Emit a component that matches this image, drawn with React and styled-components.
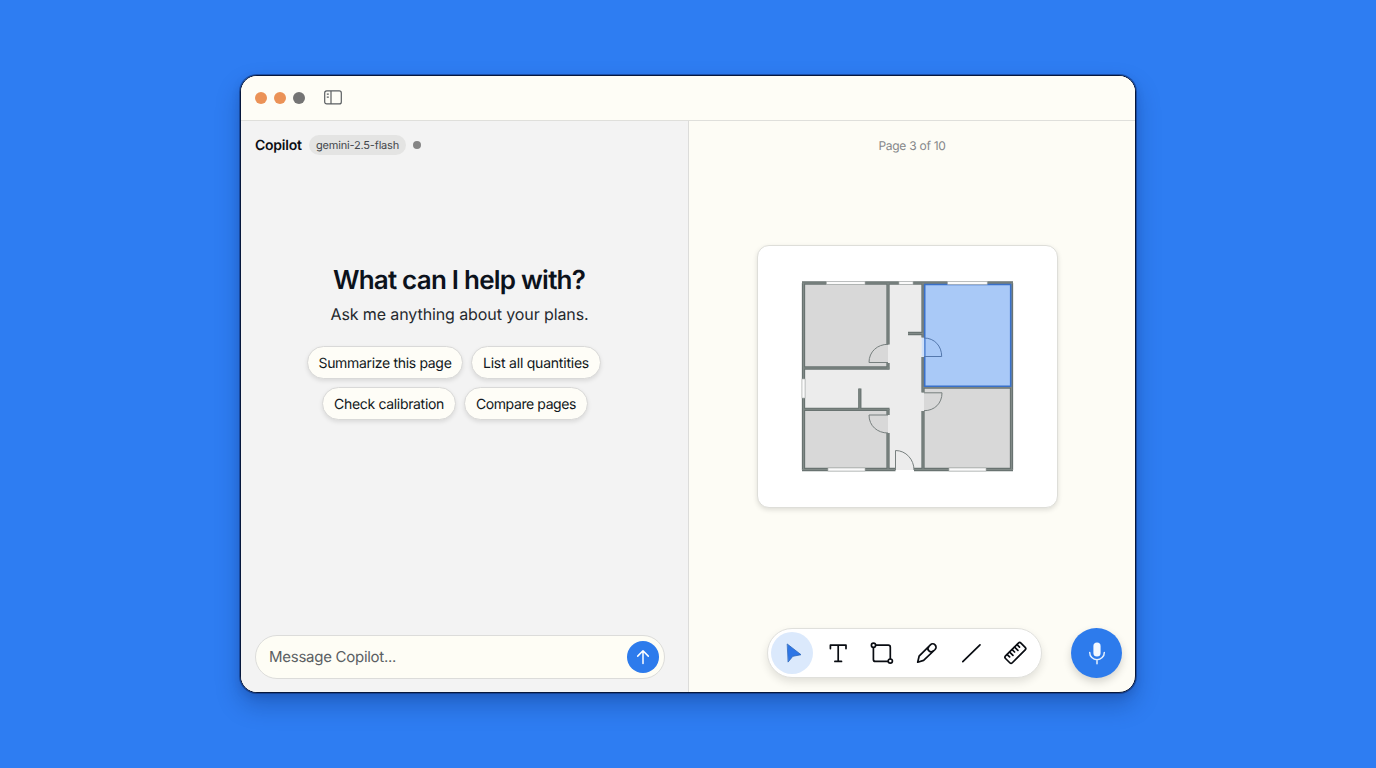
import React, { useState } from 'react';
import styled, { createGlobalStyle } from 'styled-components';


const GlobalStyle = createGlobalStyle`
    * {
        box-sizing: border-box;
    }

    body {
        background-color: #2e7df2;
        font-family: Inter, "Liberation Sans", sans-serif;
        margin: 0;
        text-rendering: geometricPrecision;
    }

    button, input {
        font-family: inherit;
        text-rendering: inherit;
    }
`

const Desktop = styled.main`
    height: 768px;
    padding: 75px 240px 0;
    width: 1376px;
`

const Window = styled.section`
    background-color: #fdfcf5;
    border: 1px solid #07183c;
    border-radius: 17px;
    box-shadow: 0 0 0 1px rgba(9, 40, 105, 0.5), 0 12px 24px rgba(10, 35, 95, 0.3), 0 3px 8px rgba(10, 35, 95, 0.15);
    display: flex;
    flex-direction: column;
    height: 618px;
    overflow: hidden;
`

const TitleBar = styled.header`
    align-items: center;
    background-color: #fefdf6;
    border-bottom: 1px solid #dfdfdb;
    display: flex;
    gap: 7px;
    height: 45px;
    padding: 0 0 1px 14px;
`

const Light = styled.span`
    background-color: ${props => props.$color};
    border-radius: 50%;
    height: 12px;
    width: 12px;
`

const SidebarIcon = styled.svg`
    display: block;
    margin-left: 12px;
`

const Columns = styled.div`
    display: grid;
    flex: 1;
    grid-template-columns: 448px 1fr;
`

const ChatPane = styled.div`
    background-color: #f3f3f3;
    border-right: 1px solid #dcdcda;
    display: flex;
    flex-direction: column;
    padding: 14px 23px 13px 14px;
`

const ChatHeader = styled.div`
    align-items: center;
    display: flex;
    height: 20px;
`

const Name = styled.h2`
    color: #0c0f14;
    font-size: 14px;
    font-weight: 600;
    letter-spacing: -0.25px;
    line-height: 18px;
    margin: 2px 0 0;
    width: 54px;
`

const Model = styled.span`
    background-color: #e4e4e3;
    border-radius: 10px;
    color: #43474b;
    font-size: 11px;
    height: 20px;
    letter-spacing: -0.18px;
    line-height: 20px;
    text-align: center;
    white-space: nowrap;
    width: 97px;
`

const StatusDot = styled.span`
    background-color: #858585;
    border-radius: 50%;
    height: 8px;
    margin-left: 6.5px;
    width: 8px;
`

const Welcome = styled.div`
    align-items: center;
    display: flex;
    flex: 1;
    flex-direction: column;
    padding-top: 109px;
`

const Title = styled.h1`
    color: #0c121b;
    font-size: 26px;
    font-weight: 600;
    letter-spacing: -0.77px;
    line-height: 34px;
    margin: 0 2px 0 0;
`

const Blurb = styled.p`
    color: #25292e;
    font-size: 16px;
    letter-spacing: -0.1px;
    line-height: 20px;
    margin: 6px 1px 22px 0;
`

const Chips = styled.div`
    display: flex;
    gap: 8px;
    margin-bottom: 8px;
    transform: translateX(${props => props.$shift || 0}px);
`

const Chip = styled.button`
    background-color: #fefdf7;
    border: 1px solid #d9d9d8;
    border-radius: 17px;
    box-shadow: 0 2px 4px rgba(0, 0, 0, 0.1);
    color: #101720;
    cursor: pointer;
    font-size: 14px;
    height: 33px;
    letter-spacing: ${props => props.$tracking || -0.32}px;
    line-height: 31px;
    padding: 1px 0 0;
    text-align: center;
    white-space: nowrap;
    width: ${props => props.$width}px;
`

const Composer = styled.form`
    align-items: center;
    background-color: #fefdf5;
    border: 1px solid #dcdcda;
    border-radius: 22px;
    display: flex;
    height: 44px;
    padding: 0 5px 0 13px;
`

const Message = styled.input`
    background: none;
    border: none;
    color: #24292e;
    flex: 1;
    font-size: 15px;
    letter-spacing: -0.27px;
    min-width: 0;
    outline: none;
    padding: 0 0 2px;

    &::placeholder {
        color: #5b5f63;
        opacity: 1;
    }
`

const Send = styled.button`
    background-color: #2d7bec;
    border: none;
    border-radius: 50%;
    cursor: pointer;
    display: block;
    height: 32px;
    padding: 0;
    width: 32px;
`

const PlanPane = styled.div`
    align-items: center;
    display: flex;
    flex-direction: column;
    padding-top: 15px;
`

const PageLabel = styled.p`
    color: #85878a;
    font-size: 12px;
    letter-spacing: -0.27px;
    line-height: 20px;
    margin: 0;
`

const Sheet = styled.div`
    background-color: #fff;
    border: 1px solid #deded9;
    border-radius: 12px;
    box-shadow: 0 2px 5px rgba(0, 0, 0, 0.12);
    height: 263px;
    margin: 89px 9px 0 0;
    padding: 34px 0 0 42px;
    width: 301px;
`

const Plan = styled.svg`
    display: block;
`

const BottomBar = styled.div`
    align-items: flex-start;
    display: flex;
    gap: 29px;
    margin: 120px 0 0 65px;
`

const Toolbar = styled.div`
    align-items: center;
    background-color: #fff;
    border: 1px solid #e0e0dc;
    border-radius: 26px;
    box-shadow: 0 4px 8px rgba(0, 0, 0, 0.11);
    display: flex;
    gap: 2.7px;
    height: 50px;
    padding-left: 3px;
    width: 275px;
`

const Tool = styled.button`
    background-color: ${props => props.$active ? '#dbe9fc' : 'transparent'};
    border: none;
    border-radius: 50%;
    color: ${props => props.$active ? '#2e76e6' : '#090c12'};
    cursor: pointer;
    height: 42px;
    padding: 0;
    width: 42px;
`

const Glyph = styled.svg`
    display: block;
    margin: auto;
`

const Mic = styled.button`
    background-color: #2d7bec;
    border: none;
    border-radius: 50%;
    box-shadow: 0 4px 8px rgba(0, 0, 0, 0.16);
    cursor: pointer;
    height: 50px;
    padding: 0;
    width: 51px;
`


const tools = [
    { id: 'select', icon: <path d="M11.5 7.2 25 17.7 16.8 19.3 12.3 24.8z" fill="currentColor" stroke="#2865ba" strokeWidth=".8" strokeLinejoin="round" /> },
    { id: 'text', icon: <path d="M9.4 11.6V8.2H25v3.4M17.2 8.2v16.2M13.9 24.4h6.6" /> },
    {
        id: 'shape',
        icon: <>
            <path d="M11.1 8.2h12.2a2 2 0 0 1 2 2v11.6M22.6 24.4H10.4a2 2 0 0 1-2-2V10.9" />
            <circle cx="8.5" cy="8.3" r="2.1" />
            <circle cx="25.3" cy="24.1" r="2.1" />
        </>
    },
    { id: 'pencil', icon: <path d="m7.7 25.2 1.4-6L20.4 7.9a3.2 3.2 0 0 1 4.7 4.6L13.6 23.4zM18.9 9.6a3 3 0 0 0 4.4 4.3" /> },
    { id: 'line', icon: <path d="M7.8 24.7 25 7.8" /> },
    {
        id: 'measure',
        icon: <g transform="rotate(-45 16 16)">
            <rect x="5.4" y="11.4" width="21.8" height="9.6" rx="1.8" />
            <path d="M9.4 11.6v3.4M12.9 11.6v4.6M16.4 11.6v3.4M19.9 11.6v4.6M23.4 11.6v3.4" />
        </g>
    }
]

// drawn in page units, so the rooms and walls share one origin
const walls = [
    'M803.5 283V470', 'M1011.5 283V470',
    'M802 283H1013', 'M802 469.5H895.5', 'M914 469.5H1013',
    'M888 283V344.5', 'M888 363V369.5', 'M804 368H889.5',
    'M804 409.3H889.5', 'M888 409V415', 'M888 433V470', 'M859.8 388.5V409',
    'M923 283V337.5', 'M923 357V392.5', 'M923 411V470',
    'M908 333.5H923', 'M923 387.2H1012'
]

const doors = [
    'M888 362.5H869C869 351.5 877.5 344.3 888 344.3',
    'M888 415H869C869 426 877.5 433 888 433',
    'M895.5 470V450.5C906 450.5 914 459.5 914 470',
    'M924 392.8H942C942 403.5 934.5 410.7 924 410.7'
]

const openings = [
    { x: 826.5, y: 281.4, width: 38.5, height: 3 },
    { x: 899, y: 281.4, width: 14, height: 3 },
    { x: 947.7, y: 281.4, width: 39.5, height: 3 },
    { x: 828, y: 468, width: 37, height: 3 },
    { x: 949, y: 468, width: 37, height: 3 },
    { x: 802, y: 379, width: 3, height: 19 }
]


const FloorPlan = () => (
    <Plan width="215" height="194" viewBox="800 280 215 194">
        <path d="M803 283h209v187H803z" fill="#ececec" />
        <path d="M804 284h84v84h-84zM804 410h84v59h-84zM924 388h87v81h-87z" fill="#d8d8d8" />
        <path d={walls.join('')} fill="none" stroke="#697371" strokeWidth="3.3" />
        <path d={walls.join('')} fill="none" stroke="#818a87" strokeWidth="1" />
        <path d="M924.7 284.5h86v101.7h-86z" fill="#a9c9f7" stroke="#3970c9" strokeWidth="1.6" />
        <path d="M923 338v18.5" stroke="#cfe0f8" strokeWidth="2.5" />
        <path d="M924 338C934.5 338 941.7 346 941.7 356.5H924" fill="none" stroke="#5478ad" />
        <path d={doors.join('')} fill="none" stroke="#777f7e" />
        {
            openings.map((o, ix) => (
                <rect key={ix} {...o} fill="#fafafa" stroke="#aeb2b1" strokeWidth=".6" />
            ))
        }
    </Plan>
)


function App() {
    const [active, setActive] = useState('select');
    const [message, setMessage] = useState('');

    const submit = event => {
        event.preventDefault()
        setMessage('')
    }

    return (
        <Desktop>
            <GlobalStyle />
            <Window>
                <TitleBar>
                    <Light $color="#eb9257" />
                    <Light $color="#eb9257" />
                    <Light $color="#747474" />
                    <SidebarIcon width="18" height="15" viewBox="0 0 18 15" fill="none" stroke="#5a5e61" strokeWidth="1.2">
                        <rect x=".7" y=".9" width="16.6" height="13" rx="2" />
                        <path d="M7 1v13M2.8 4.2h2M2.8 7.2h2" />
                    </SidebarIcon>
                </TitleBar>

                <Columns>
                    <ChatPane>
                        <ChatHeader>
                            <Name>Copilot</Name>
                            <Model>gemini-2.5-flash</Model>
                            <StatusDot />
                        </ChatHeader>

                        <Welcome>
                            <Title>What can I help with?</Title>
                            <Blurb>Ask me anything about your plans.</Blurb>
                            <Chips $shift={-6}>
                                <Chip $width={156}>Summarize this page</Chip>
                                <Chip $width={130} $tracking={-0.22}>List all quantities</Chip>
                            </Chips>
                            <Chips $shift={-5}>
                                <Chip $width={134}>Check calibration</Chip>
                                <Chip $width={124} $tracking={-0.4}>Compare pages</Chip>
                            </Chips>
                        </Welcome>

                        <Composer onSubmit={submit}>
                            <Message
                                placeholder="Message Copilot..."
                                value={message}
                                onChange={event => setMessage(event.target.value)}
                            />
                            <Send aria-label="Send">
                                <Glyph width="32" height="32" viewBox="0 0 32 32" fill="none" stroke="#fff" strokeWidth="1.5" strokeLinecap="round" strokeLinejoin="round">
                                    <path d="M16 22.5V10M10.7 15.1 16 9.8l5.3 5.3" />
                                </Glyph>
                            </Send>
                        </Composer>
                    </ChatPane>

                    <PlanPane>
                        <PageLabel>Page 3 of 10</PageLabel>
                        <Sheet>
                            <FloorPlan />
                        </Sheet>
                        <BottomBar>
                            <Toolbar>
                                {
                                    tools.map(tool => (
                                        <Tool
                                            key={tool.id}
                                            aria-label={tool.id}
                                            $active={tool.id === active}
                                            onClick={() => setActive(tool.id)}
                                        >
                                            <Glyph width="32" height="32" viewBox="0 0 32 32" fill="none" stroke="currentColor" strokeWidth="1.7" strokeLinecap="round" strokeLinejoin="round">
                                                {tool.icon}
                                            </Glyph>
                                        </Tool>
                                    ))
                                }
                            </Toolbar>
                            <Mic aria-label="Voice">
                                <Glyph width="32" height="32" viewBox="0 0 32 32" fill="none" stroke="#e4effd" strokeWidth="1.5" strokeLinecap="round">
                                    <rect x="12.4" y="5.4" width="7.2" height="14.2" rx="3.6" fill="#f3f8ff" stroke="none" />
                                    <path d="M8.7 15.4a7.3 7.3 0 0 0 14.6 0M16 22.8v4" />
                                </Glyph>
                            </Mic>
                        </BottomBar>
                    </PlanPane>
                </Columns>
            </Window>
        </Desktop>
    )
}


export default App
